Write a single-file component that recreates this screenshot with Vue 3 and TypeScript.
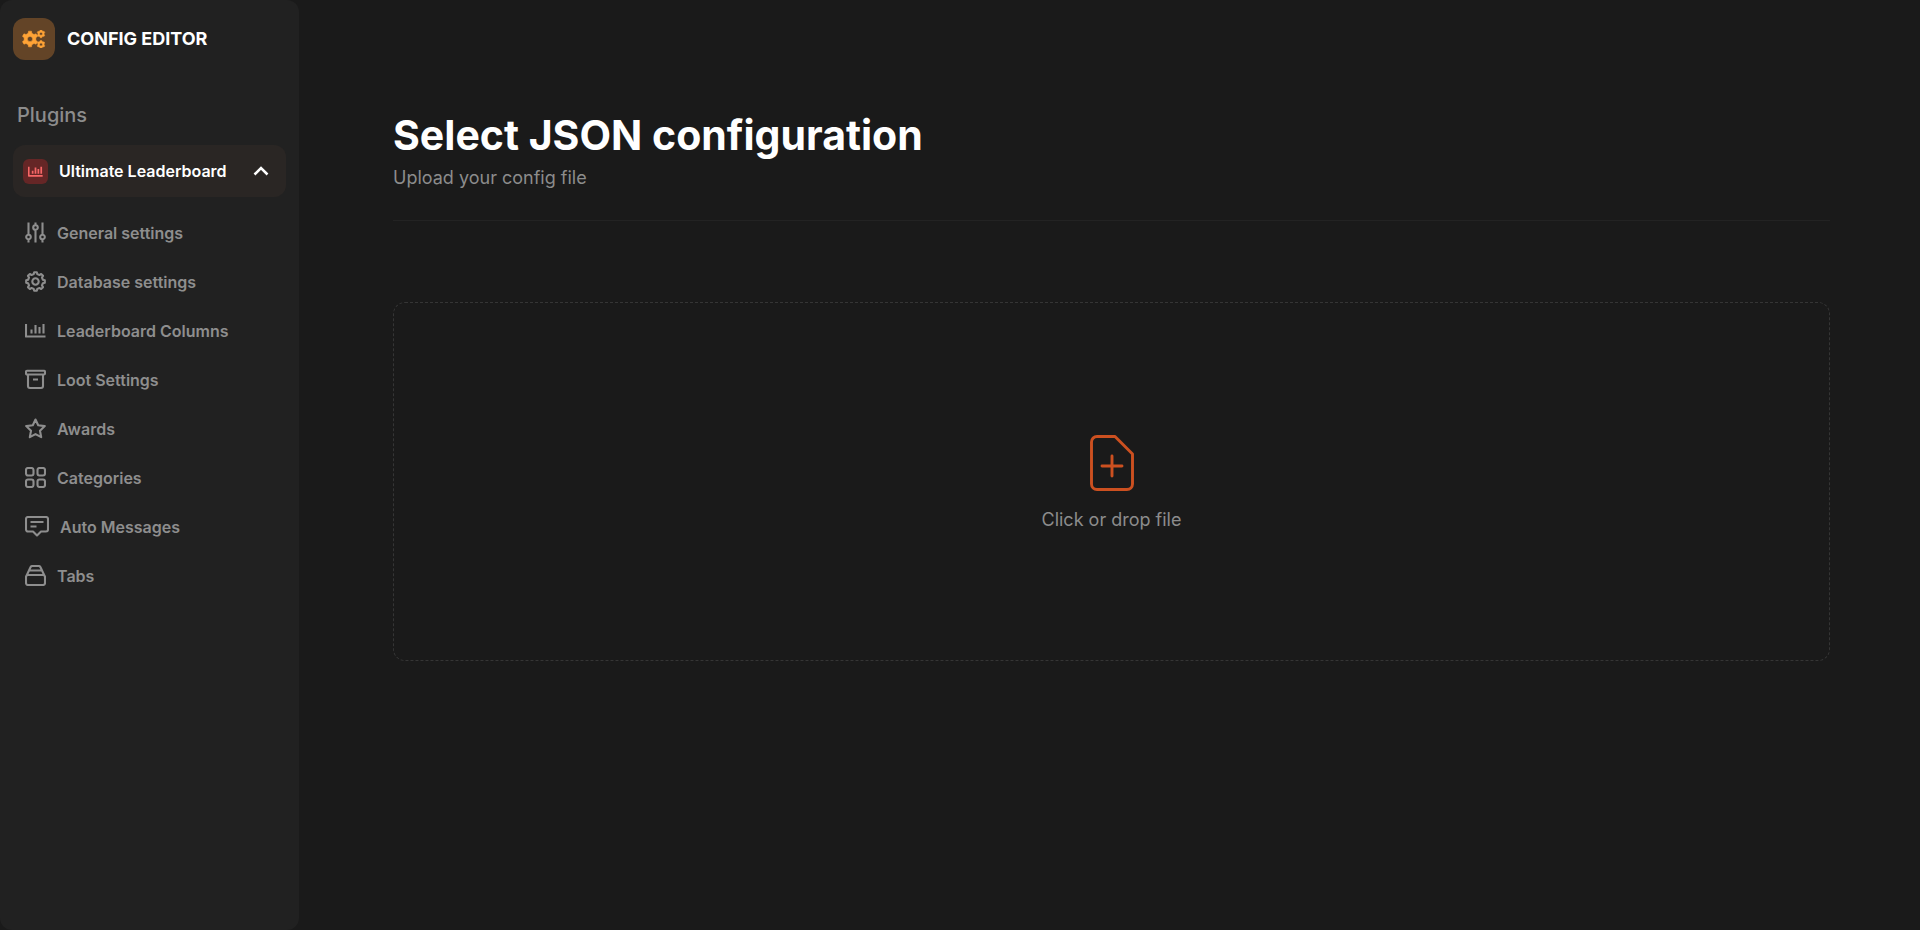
<script setup lang="ts">
import { ref } from 'vue'

interface MenuItem {
  label: string
  width: number
  path: string
}

function point(cx: number, cy: number, r: number, angle: number): string {
  return `${(cx + r * Math.cos(angle)).toFixed(2)} ${(cy + r * Math.sin(angle)).toFixed(2)}`
}

function circle(cx: number, cy: number, r: number): string {
  return `M${cx - r} ${cy}a${r} ${r} 0 1 0 ${2 * r} 0a${r} ${r} 0 1 0 ${-2 * r} 0z`
}

function gear(cx: number, cy: number, outer: number, inner: number, teeth: number): string {
  const step = (Math.PI * 2) / teeth
  const points: string[] = []
  for (let i = 0; i < teeth; i++) {
    const a = i * step - Math.PI / 2
    points.push(point(cx, cy, inner, a - step * 0.3))
    points.push(point(cx, cy, outer, a - step * 0.18))
    points.push(point(cx, cy, outer, a + step * 0.18))
    points.push(point(cx, cy, inner, a + step * 0.3))
  }
  return `M${points.join('L')}Z`
}

function roundedSquare(x: number, y: number): string {
  return `M${x + 2} ${y}h3.5a2 2 0 0 1 2 2v3.5a2 2 0 0 1-2 2h-3.5a2 2 0 0 1-2-2v-3.5a2 2 0 0 1 2-2z`
}

const logoPath = [
  gear(8, 9, 8, 6, 6) + circle(8, 9, 2.6),
  gear(19, 3.8, 4, 3.2, 6) + circle(19, 3.8, 1.5),
  gear(19, 14.4, 4, 3.2, 6) + circle(19, 14.4, 1.5),
].join('')

const chartPath = 'M1 4v12.5h19.5M6.5 9.5v4M10.5 5v8.500M14.5 7v6.500M18.5 4v9.500'

const items: MenuItem[] = [
  {
    label: 'General settings',
    width: 21,
    path: `M3.5.5v12M3.5 17.5v3M10.5.5v2.5M10.5 8v12.5M17.5.5v12M17.5 17.5v3${circle(3.5, 15, 2.3)}${circle(10.5, 5.5, 2.3)}${circle(17.5, 15, 2.3)}`,
  },
  {
    label: 'Database settings',
    width: 21,
    path: gear(10.5, 10.5, 9.4, 7.6, 8) + circle(10.5, 10.5, 3.2),
  },
  { label: 'Leaderboard Columns', width: 21, path: chartPath },
  {
    label: 'Loot Settings',
    width: 21,
    path: 'M2 1.8h17a1 1 0 0 1 1 1v1.7a1 1 0 0 1-1 1H2a1 1 0 0 1-1-1V2.8a1 1 0 0 1 1-1zM3 5.5v11.5a2 2 0 0 0 2 2h11a2 2 0 0 0 2-2V5.5M8 10.5h5',
  },
  {
    label: 'Awards',
    width: 21,
    path: 'M10.5 1.5l2.7 5.8 6.6.8-4.8 4.6 1.2 6.5-5.7-3.1-5.7 3.1 1.2-6.5L1.2 8.1l6.6-.8z',
  },
  {
    label: 'Categories',
    width: 21,
    path: [roundedSquare(1, 1), roundedSquare(12.5, 1), roundedSquare(1, 12.5), roundedSquare(12.5, 12.5)].join(''),
  },
  {
    label: 'Auto Messages',
    width: 24,
    path: 'M3 1h18a2 2 0 0 1 2 2v10.500a2 2 0 0 1-2 2h-5l-4 4-4-4H3a2 2 0 0 1-2-2V3a2 2 0 0 1 2-2zM5.500 6h13M5.500 10.500h6',
  },
  {
    label: 'Tabs',
    width: 21,
    path: 'M3 10h15a2 2 0 0 1 2 2v6a2 2 0 0 1-2 2H3a2 2 0 0 1-2-2v-6a2 2 0 0 1 2-2zM1.4 11L5.5 2.3Q6 1 7.3 1h6.4Q15 1 15.500 2.300L19.600 11M4.500 5.500h12',
  },
]

const expanded = ref(true)
</script>

<template>
  <div class="layout">
    <aside class="sidebar">
      <header class="brand">
        <span class="brand-badge">
          <svg width="24" height="18" viewBox="0 0 24 18" aria-hidden="true">
            <path
              :d="logoPath"
              fill="currentColor"
              fill-rule="evenodd"
              stroke="currentColor"
              stroke-width="0.5"
              stroke-linejoin="round"
            />
          </svg>
        </span>
        <span class="brand-name">CONFIG EDITOR</span>
      </header>

      <h2 class="section-title">Plugins</h2>

      <button class="plugin" type="button" :aria-expanded="expanded" @click="expanded = !expanded">
        <span class="plugin-badge">
          <svg width="15" height="15" viewBox="0 0 21 21" aria-hidden="true">
            <path :d="chartPath" fill="none" stroke="currentColor" stroke-width="2.4" stroke-linejoin="round" />
          </svg>
        </span>
        <span>Ultimate Leaderboard</span>
        <svg class="chevron" width="16" height="10" viewBox="0 0 16 10" aria-hidden="true">
          <path d="M1.5 8.5L8 2l6.5 6.5" fill="none" stroke="currentColor" stroke-width="2.5" />
        </svg>
      </button>

      <nav v-if="expanded" class="menu" aria-label="Ultimate Leaderboard">
        <a v-for="item in items" :key="item.label" class="menu-item" href="#">
          <svg :width="item.width" height="21" :viewBox="`0 0 ${item.width} 21`" aria-hidden="true">
            <path :d="item.path" fill="none" stroke="currentColor" stroke-width="2.1" stroke-linejoin="round" />
          </svg>
          <span>{{ item.label }}</span>
        </a>
      </nav>
    </aside>

    <main class="content">
      <header class="page-header">
        <h1>Select JSON configuration</h1>
        <p>Upload your config file</p>
      </header>

      <label class="dropzone">
        <input class="file-input" type="file" accept=".json" />
        <svg width="44" height="56" viewBox="0 0 44 56" aria-hidden="true">
          <path
            d="M7 1.5h18L42.5 19v30a5.5 5.5 0 0 1-5.5 5.5H7A5.5 5.5 0 0 1 1.5 49V7A5.5 5.5 0 0 1 7 1.5zM22 21v20M12 31h20"
            fill="none"
            stroke="currentColor"
            stroke-width="2.9"
            stroke-linejoin="round"
            stroke-linecap="round"
          />
        </svg>
        <span>Click or drop file</span>
      </label>
    </main>
  </div>
</template>

<style>
body {
  margin: 0;
  background: #1a1a1a;
}
</style>

<style scoped>
.layout {
  display: flex;
  min-height: 100vh;
  font-family: Inter, 'Liberation Sans', sans-serif;
  background: #1a1a1a;
}

.sidebar {
  box-sizing: border-box;
  flex: 0 0 299px;
  padding: 18px 13px;
  border-radius: 12px;
  background: #212121;
}

.brand {
  display: flex;
  align-items: center;
  gap: 12px;
}

.brand-badge {
  display: grid;
  place-items: center;
  width: 42px;
  height: 42px;
  border-radius: 12px;
  background: #634427;
  color: #ffa336;
}

.brand-name {
  color: #ffffff;
  font-size: 18px;
  font-weight: 700;
  line-height: 20px;
}

.section-title {
  margin: 43px 0 17px 4px;
  color: #8c8c8c;
  font-size: 20px;
  font-weight: 500;
  line-height: 25px;
}

.plugin {
  display: flex;
  align-items: center;
  box-sizing: border-box;
  width: 100%;
  height: 52px;
  padding: 0 17px 0 10px;
  border: 0;
  border-radius: 12px;
  background: #2a2624;
  color: #ffffff;
  font: inherit;
  font-size: 16px;
  font-weight: 600;
  cursor: pointer;
}

.plugin-badge {
  display: grid;
  place-items: center;
  width: 25px;
  height: 25px;
  margin-right: 11px;
  border-radius: 6px;
  background: #652626;
  color: #f76767;
}

.chevron {
  margin-left: auto;
}

.menu {
  display: flex;
  flex-direction: column;
  margin-top: 11px;
}

.menu-item {
  display: flex;
  align-items: center;
  gap: 11px;
  height: 49px;
  padding-left: 12px;
  color: #8e8e8e;
  font-size: 16px;
  font-weight: 600;
  text-decoration: none;
}

.content {
  flex: 1;
  min-width: 0;
  padding: 108px 90px 40px 94px;
}

.page-header {
  padding-bottom: 30px;
  border-bottom: 1px solid #232323;
}

h1 {
  margin: 0;
  color: #ffffff;
  font-size: 41px;
  font-weight: 700;
  line-height: 54px;
}

p {
  margin: 4px 0 0;
  color: #8c8c8c;
  font-size: 18px;
  line-height: 24px;
}

.dropzone {
  display: flex;
  flex-direction: column;
  align-items: center;
  justify-content: center;
  gap: 17px;
  box-sizing: border-box;
  min-height: 359px;
  margin-top: 81px;
  padding-top: 4px;
  border: 1px dashed #353535;
  border-radius: 12px;
  color: #8c8c8c;
  font-size: 18px;
  line-height: 24px;
  cursor: pointer;
}

.dropzone svg {
  color: #cc5020;
}

.file-input {
  position: absolute;
  width: 1px;
  height: 1px;
  opacity: 0;
}
</style>
